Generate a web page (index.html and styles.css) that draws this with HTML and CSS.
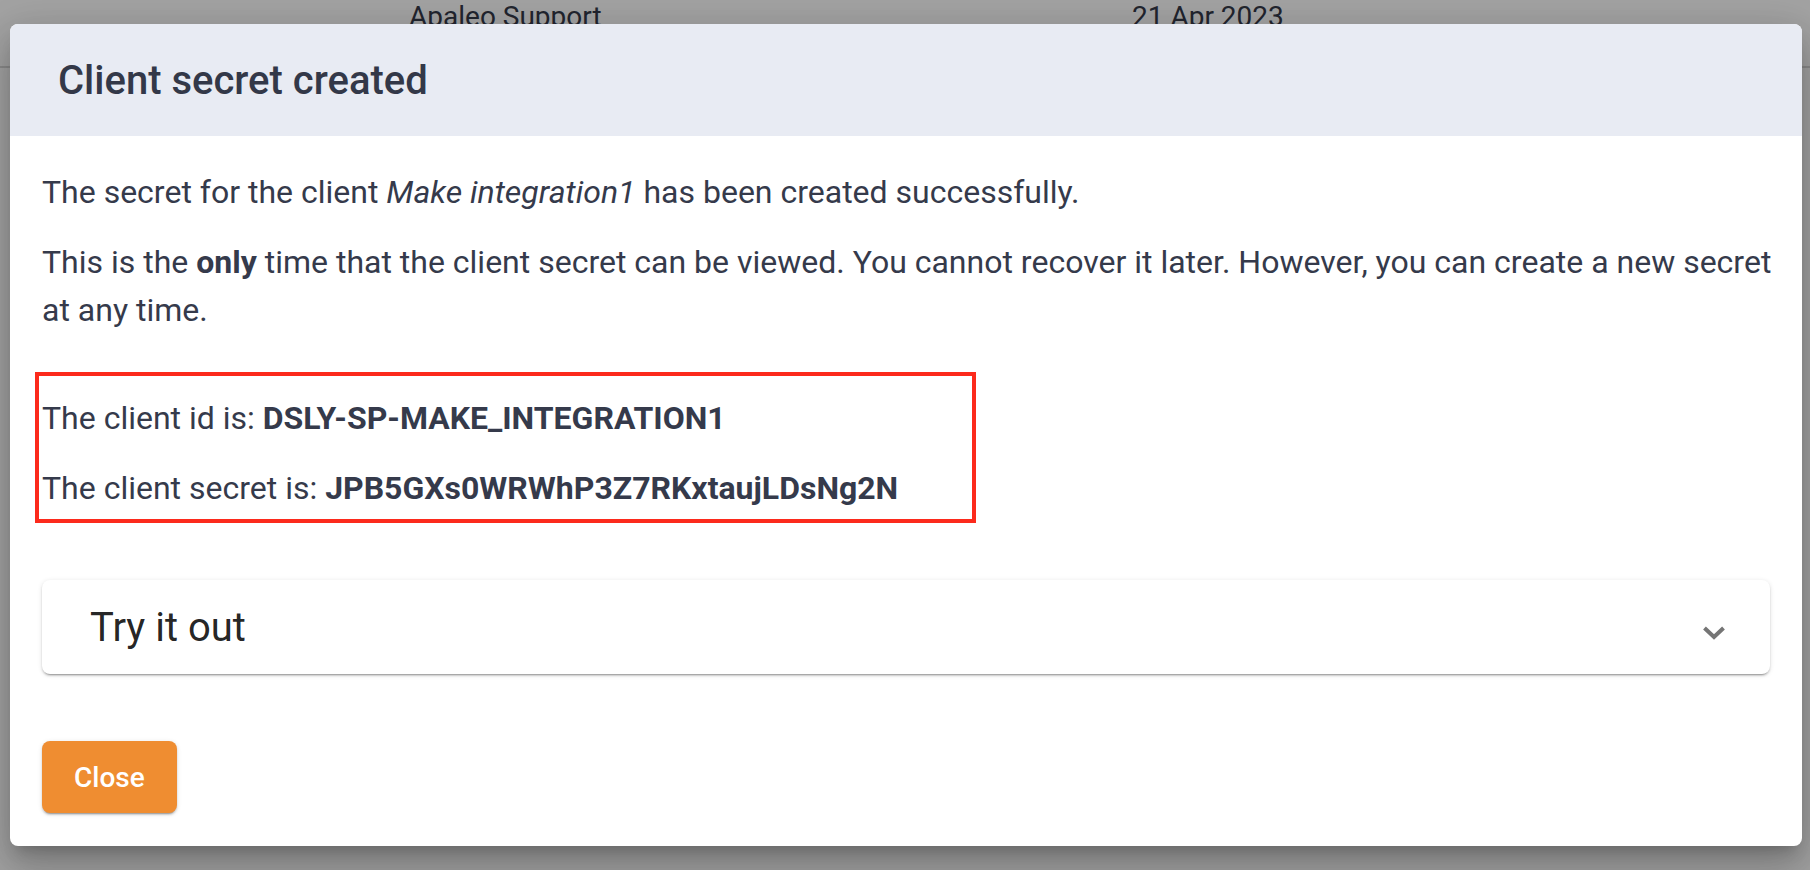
FILE: index.html
```html
<!DOCTYPE html>
<html lang="en">
<head>
    <meta charset="UTF-8">
    <meta name="viewport" content="width=device-width, initial-scale=1.0">
    <title>Client secret created</title>

    <link rel="stylesheet" href="styles.css">
</head>
<body>
    <div id="page">
        <div class="table-row">
            <div class="cell cell-name">Apaleo Support</div>
            <div class="cell cell-date">21 Apr 2023</div>
        </div>
    </div>

    <div id="backdrop"></div>

    <div id="dialog">
        <div class="dialog-header">
            <h2 class="dialog-title">Client secret created</h2>
        </div>

        <div class="dialog-body">
            <p>The secret for the client <em>Make integration1</em> has been created successfully.</p>
            <p class="last wide">This is the <strong>only</strong> time that the client secret can be viewed. You cannot recover it later. However, you can create a new secret at any time.</p>

            <div class="credentials">
                <p>The client id is: <strong>DSLY-SP-MAKE_INTEGRATION1</strong></p>
                <p class="last">The client secret is: <strong>JPB5GXs0WRWhP3Z7RKxtaujLDsNg2N</strong></p>
            </div>

            <div class="expansion-panel">
                <span class="panel-title">Try it out</span>
                <svg class="panel-indicator" width="24" height="16" viewBox="0 0 24 16">
                    <polyline points="2.5,3 12,12 21.5,3" fill="none" stroke="#757575" stroke-width="4"/>
                </svg>
            </div>

            <div class="dialog-actions">
                <button class="btn-orange">Close</button>
            </div>
        </div>
    </div>
</body>
</html>
```

FILE: styles.css
```css
body, html {
    padding: 0 !important;
    margin: 0 !important;
}

body {
    width: 1810px;
    height: 870px;
    overflow: hidden;
    background-color: white;
    font-family: Roboto, "Liberation Sans", sans-serif;
    color: #353a4b;
}

/* page behind the dialog */
#page {
    height: 100%;
}

.table-row {
    display: grid;
    grid-template-columns: 409px 723px 1fr;
    height: 66px;
    border-bottom: 2px solid #d9d9d9;
    font-size: 28px;
    line-height: 34px;
    color: #363a4a;
}

.cell-name {
    grid-column: 2;
}

.cell-date {
    grid-column: 3;
}

#backdrop {
    position: absolute;
    top: 0;
    left: 0;
    right: 0;
    bottom: 0;
    background-color: rgba(0, 0, 0, 0.36);
}

/* dialog */
#dialog {
    position: absolute;
    top: 24px;
    left: 10px;
    width: 1792px;
    height: 822px;
    display: flex;
    flex-direction: column;
    border-radius: 8px;
    overflow: hidden;
    background-color: white;
    box-shadow: 0 11px 15px -7px rgba(0, 0, 0, 0.2),
                0 24px 38px 3px rgba(0, 0, 0, 0.14),
                0 9px 46px 8px rgba(0, 0, 0, 0.12);
}

.dialog-header {
    display: flex;
    align-items: center;
    height: 112px;
    padding: 0 48px;
    background-color: #e8ebf3;
}

.dialog-title {
    margin: 0;
    font-size: 40px;
    font-weight: 500;
    color: #333848;
}

.dialog-body {
    padding: 32px;
}

.dialog-body p {
    margin: 0 0 22px 0;
    font-size: 32px;
    line-height: 48px;
}

.dialog-body p.last {
    margin-bottom: 0;
}

.dialog-body p.wide {
    margin-right: -12px;
}

.dialog-body strong {
    font-weight: 700;
}

.credentials {
    box-sizing: border-box;
    width: 941px;
    margin: 38px 0 0 -7px;
    padding: 18px 0 7px 3px;
    border: 4px solid #fc2a1c;
}

.expansion-panel {
    display: flex;
    align-items: center;
    justify-content: space-between;
    height: 94px;
    margin-top: 57px;
    padding: 0 44px 0 48px;
    border-radius: 8px;
    background-color: white;
    box-shadow: 0 3px 1px -2px rgba(0, 0, 0, 0.2),
                0 2px 2px 0 rgba(0, 0, 0, 0.14),
                0 1px 5px 0 rgba(0, 0, 0, 0.12);
}

.panel-title {
    font-size: 40px;
    color: rgba(0, 0, 0, 0.87);
}

.panel-indicator {
    margin-top: 12px;
}

.dialog-actions {
    margin-top: 67px;
}

.btn-orange {
    height: 72px;
    padding: 0 32px;
    border: none;
    border-radius: 8px;
    background-color: #ef8d31;
    color: white;
    font-family: Roboto, "Liberation Sans", sans-serif;
    font-size: 28px;
    font-weight: 500;
    box-shadow: 0 3px 1px -2px rgba(0, 0, 0, 0.2),
                0 2px 2px 0 rgba(0, 0, 0, 0.14),
                0 1px 5px 0 rgba(0, 0, 0, 0.12);
}
```
